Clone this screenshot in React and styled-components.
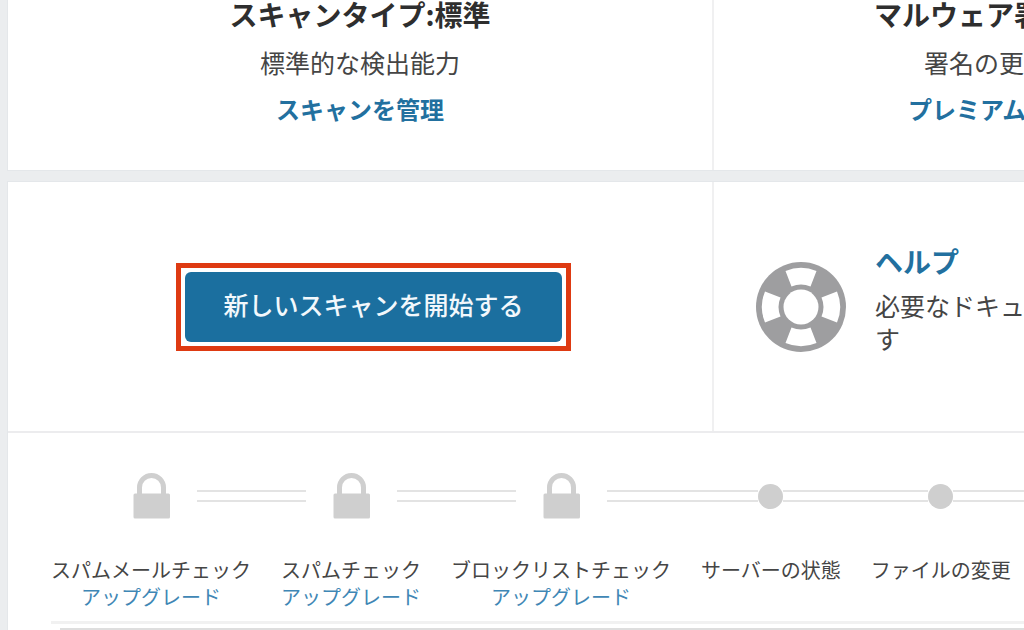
import React from "react";
import styled, { createGlobalStyle, css } from "styled-components";

const GlobalStyle = createGlobalStyle`
  * {
    box-sizing: border-box;
  }

  body {
    margin: 0;
    background-color: #ebedef;
    color: #454545;
    font-family: "Noto Sans CJK JP", sans-serif;
    overflow: hidden;
  }
`;

const steps = [
  { label: "スパムメールチェック", locked: true },
  { label: "スパムチェック", locked: true },
  { label: "ブロックリストチェック", locked: true },
  { label: "サーバーの状態" },
  { label: "ファイルの変更" },
];

function LockIcon() {
  return (
    <svg width="37" height="46" viewBox="0 0 37 46" aria-hidden="true">
      <path d="M6.5 22V14.5a12 12 0 0 1 24 0V22" fill="none" stroke="#cfcfcf" strokeWidth="5" />
      <rect x="0.5" y="20.5" width="36.5" height="25" rx="1.5" fill="#cfcfcf" />
    </svg>
  );
}

function LifeRingIcon() {
  return (
    <svg width="92" height="92" viewBox="-46 -46 92 92" aria-hidden="true">
      <circle r="45" fill="#9e9ea0" />
      <circle r="17.5" fill="#fff" />
      {[0, 90, 180, 270].map((angle) => (
        <path
          key={angle}
          d="M-15.5 -36Q0 -42.5 15.5 -36L9.5 -20.5Q0 -24.5 -9.5 -20.5Z"
          fill="#fff"
          transform={`rotate(${angle})`}
        />
      ))}
    </svg>
  );
}

function Step(props) {
  const { label, locked, first } = props;

  return (
    <StepItem>
      <Track>
        <Rail $hidden={first} />
        {locked ? (
          <LockSlot>
            <LockIcon />
          </LockSlot>
        ) : (
          <Dot />
        )}
        <Rail />
      </Track>
      <StepLabel>{label}</StepLabel>
      {locked && <UpgradeLink href="#upgrade">アップグレード</UpgradeLink>}
    </StepItem>
  );
}

function App() {
  return (
    <Page>
      <GlobalStyle />
      <Panel>
        <Columns>
          <StatusCell>
            <StatusTitle>スキャンタイプ:標準</StatusTitle>
            <StatusText>標準的な検出能力</StatusText>
            <StatusLink href="#manage">スキャンを管理</StatusLink>
          </StatusCell>
          <StatusCell $clipped>
            <StatusTitle $indent={160}>マルウェア署</StatusTitle>
            <StatusText $indent={210}>署名の更</StatusText>
            <StatusLink href="#premium" $indent={194}>プレミアム</StatusLink>
          </StatusCell>
        </Columns>
      </Panel>
      <Panel>
        <Columns $divided>
          <ScanCell>
            <Highlight>
              <ScanButton type="button">新しいスキャンを開始する</ScanButton>
            </Highlight>
          </ScanCell>
          <HelpCell>
            <LifeRingIcon />
            <HelpBody>
              <HelpLink href="#help">ヘルプ</HelpLink>
              <HelpText>
                必要なドキュ
                <br />
                す
              </HelpText>
            </HelpBody>
          </HelpCell>
        </Columns>
        <Steps>
          {steps.map((step, index) => (
            <Step key={step.label} label={step.label} locked={step.locked} first={index === 0} />
          ))}
        </Steps>
        <Results>
          <ResultsInner />
        </Results>
      </Panel>
    </Page>
  );
}

const Page = styled.main`
  display: flex;
  flex-direction: column;
  gap: 12px;
  padding-left: 8px;
`;

const Panel = styled.section`
  background-color: #fff;
  box-shadow: 0 0 0 1px #e4e7ea;
  overflow: hidden;
`;

const Columns = styled.div`
  display: grid;
  grid-template-columns: minmax(0, 704fr) minmax(0, 312fr);
  border-bottom: ${(props) => (props.$divided ? "2px solid #ececee" : "none")};

  & > * + * {
    border-left: 2px solid #f0f0f1;
  }
`;

const StatusCell = styled.div`
  display: flex;
  flex-direction: column;
  align-items: ${(props) => (props.$clipped ? "flex-start" : "center")};
  padding-bottom: 45px;
  overflow: hidden;
  white-space: nowrap;
`;

const indented = css`
  margin-left: ${(props) => props.$indent || 0}px;
`;

const StatusTitle = styled.h2`
  ${indented}
  margin-top: 0;
  margin-bottom: 18px;
  color: #2e2e2e;
  font-size: 28px;
  font-weight: 700;
  line-height: 28px;
`;

const StatusText = styled.p`
  ${indented}
  margin-top: 0;
  margin-bottom: 14px;
  font-size: 25px;
  line-height: 33px;
`;

const StatusLink = styled.a`
  ${indented}
  color: #22709f;
  font-size: 24px;
  font-weight: 700;
  line-height: 32px;
  text-decoration: none;
`;

const ScanCell = styled.div`
  display: flex;
  align-items: center;
  justify-content: center;
  padding: 81px 0 80px 27px;
`;

const Highlight = styled.div`
  padding: 4px;
  border: 5px solid #de3a12;
`;

const ScanButton = styled.button`
  display: block;
  padding: 16px 38px 21px;
  border: 0;
  border-radius: 6px;
  background-color: #1b6f9f;
  color: #f2f8fc;
  font-family: inherit;
  font-size: 25px;
  font-weight: 500;
  line-height: 33px;
`;

const HelpCell = styled.div`
  display: flex;
  align-items: center;
  gap: 28px;
  padding-left: 41px;
  overflow: hidden;
  white-space: nowrap;

  svg {
    flex-shrink: 0;
  }
`;

const HelpBody = styled.div`
  padding-bottom: 13px;
`;

const HelpLink = styled.a`
  display: block;
  margin-bottom: 13px;
  color: #22709f;
  font-size: 28px;
  font-weight: 700;
  line-height: 30px;
  text-decoration: none;
`;

const HelpText = styled.p`
  margin: 0;
  font-size: 25px;
  line-height: 33px;
`;

const Steps = styled.ol`
  display: flex;
  margin: 0;
  padding: 39px 0 11px 28px;
  list-style: none;
`;

const StepItem = styled.li`
  display: flex;
  flex-direction: column;
  align-items: center;
  flex-shrink: 0;
  font-size: 20px;
  line-height: 27px;
`;

const Track = styled.div`
  display: flex;
  align-items: center;
  align-self: stretch;
  height: 48px;
  margin-bottom: 36px;
`;

const Rail = styled.span`
  flex: 1;
  height: 12px;
  border: solid #e3e3e3;
  border-width: 2px 0;
  visibility: ${(props) => (props.$hidden ? "hidden" : "visible")};
`;

const LockSlot = styled.span`
  display: flex;
  padding: 0 27px;
`;

const Dot = styled.span`
  width: 25px;
  height: 25px;
  border-radius: 50%;
  background-color: #cfcfcf;
`;

const StepLabel = styled.span`
  padding: 0 15px;
  white-space: nowrap;
`;

const UpgradeLink = styled.a`
  color: #3f87b5;
  text-decoration: none;
`;

const Results = styled.div`
  margin-left: 43px;
  padding: 4px 0 0 9px;
  border-top: 3px solid #f1f1f1;
`;

const ResultsInner = styled.div`
  height: 12px;
  border-top: 2px solid #dedede;
`;

export default App;
